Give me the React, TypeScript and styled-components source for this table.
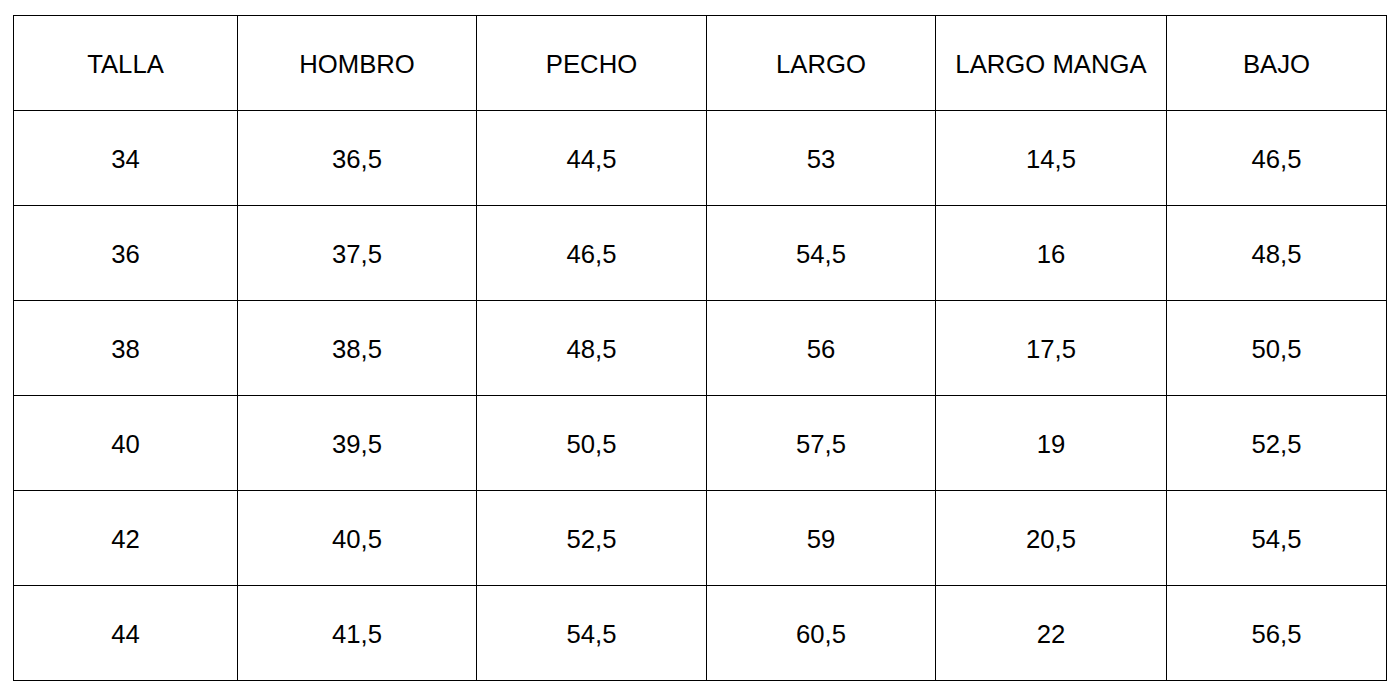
import styled, { createGlobalStyle } from "styled-components";

const headers = ["TALLA", "HOMBRO", "PECHO", "LARGO", "LARGO MANGA", "BAJO"];
const widths = [224, 239, 230, 229, 231, 220];

const rows = [
  ["34", "36,5", "44,5", "53", "14,5", "46,5"],
  ["36", "37,5", "46,5", "54,5", "16", "48,5"],
  ["38", "38,5", "48,5", "56", "17,5", "50,5"],
  ["40", "39,5", "50,5", "57,5", "19", "52,5"],
  ["42", "40,5", "52,5", "59", "20,5", "54,5"],
  ["44", "41,5", "54,5", "60,5", "22", "56,5"],
];

const GlobalStyle = createGlobalStyle`
  * {
    box-sizing: border-box;
  }
  body {
    margin: 0;
    background: #ffffff;
    font-family: "Liberation Sans", Arial, sans-serif;
    color: #000000;
  }
`;

const Page = styled.div`
  padding: 15px 13px;
`;

const Table = styled.table`
  border-collapse: separate;
  border-spacing: 0;
  table-layout: fixed;
  width: 1374px;
  border-top: 1px solid #000;
  border-left: 1px solid #000;
`;

const Cell = styled.td`
  height: 95px;
  padding: 3px 0 0;
  border-right: 1px solid #000;
  border-bottom: 1px solid #000;
  text-align: center;
  vertical-align: middle;
  font-size: 25.7px;
  font-weight: normal;
  line-height: 1.15;
`;

const HeadCell = styled(Cell).attrs({ as: "th" })``;

export default function App() {
  return (
    <>
      <GlobalStyle />
      <Page>
        <Table>
          <colgroup>
            {widths.map((w, i) => (
              <col key={i} style={{ width: w }} />
            ))}
          </colgroup>
          <thead>
            <tr>
              {headers.map((h) => (
                <HeadCell key={h}>{h}</HeadCell>
              ))}
            </tr>
          </thead>
          <tbody>
            {rows.map((r, i) => (
              <tr key={i}>
                {r.map((v, j) => (
                  <Cell key={j}>{v}</Cell>
                ))}
              </tr>
            ))}
          </tbody>
        </Table>
      </Page>
    </>
  );
}
